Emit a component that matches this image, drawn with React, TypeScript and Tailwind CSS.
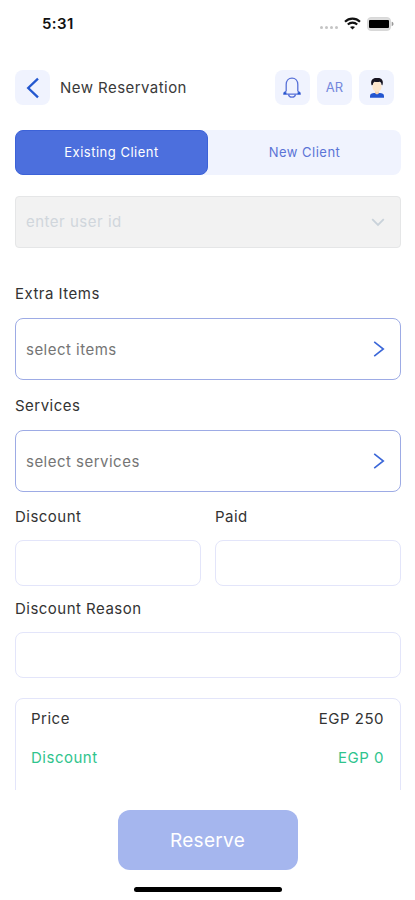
import React from 'react'
import { clsx } from 'clsx'

interface FieldProps {
  label: string
  className?: string
}

interface SelectBoxProps {
  label: string
  placeholder: string
}

const Label = ({ children, className }: { children: React.ReactNode; className?: string }) => (
  <span className={clsx('block h-6 text-[15px] leading-6 tracking-[0.48px] text-[#333]', className)}>{children}</span>
)

const IconButton = ({ children, label }: { children: React.ReactNode; label: string }) => (
  <button
    aria-label={label}
    className="flex h-[35px] w-[35px] items-center justify-center rounded-lg bg-[#f0f3fe] text-[13px] text-[#7387dc]"
  >
    {children}
  </button>
)

const StatusBar = () => (
  <div className="flex h-[47px] shrink-0 items-center justify-between pr-[21px] pl-[42px]">
    <span className="pt-px text-[15px] font-semibold tracking-[0.4px] text-[#111]">5:31</span>
    <div className="flex items-center">
      <div className="mt-2 mr-[6px] flex gap-[2px]">
        {[0, 1, 2, 3].map((dot) => (
          <span key={dot} className="h-[3px] w-[3px] rounded-full bg-[#c4c4c4]" />
        ))}
      </div>
      <svg width="17" height="13" viewBox="0 0 17 13" className="mr-[6px]" fill="none" stroke="#111" strokeWidth="2.1">
        <path d="M1 4.8C5.2.6 11.8.6 16 4.8" />
        <path d="M3.8 7.6c2.7-2.6 6.7-2.6 9.4 0" />
        <path d="M8.5 12.6 6 10.1c1.4-1.3 3.6-1.3 5 0z" fill="#111" stroke="none" />
      </svg>
      <svg width="27" height="14" viewBox="0 0 27 14">
        <rect x="0.5" y="0.5" width="23" height="13" rx="3.5" fill="#dcdcdc" stroke="#d8d8d8" />
        <rect x="2" y="3" width="20" height="8" rx="1" fill="#000" />
        <path d="M24.7 4.8c2.4.6 2.4 3.8 0 4.4z" fill="#999" />
      </svg>
    </div>
  </div>
)

const Header = () => (
  <header className="mt-[23px] flex h-[35px] shrink-0 items-center">
    <IconButton label="Back">
      <svg width="14" height="22" viewBox="0 0 14 22" fill="none" stroke="#2458cf" strokeWidth="2.3">
        <path d="M12 1.6 2.2 11l9.8 9.400" />
      </svg>
    </IconButton>
    <h1 className="ml-[10px] pt-0.5 text-[15px] tracking-[0.45px] text-[#3a3a3a]">New Reservation</h1>
    <div className="mr-[7px] ml-auto flex gap-[7px]">
      <IconButton label="Notifications">
        <svg width="20" height="22" viewBox="0 0 20 22" className="mr-0.5" fill="none" stroke="#5871d8" strokeWidth="1.3">
          <path d="M10 1.200C6.500 1.200 4.200 4 4.200 7.500v6.200c0 1-2.400 1.400-2.400 3.400h16.400c0-2-2.400-2.400-2.400-3.400V7.500c0-3.500-2.300-6.300-5.800-6.300z" />
          <path d="M6.500 17.300c.5 3.800 6.500 3.800 7 0" />
          <path d="M1.800 16.300h2.600M15.600 16.300h2.600" stroke="#2458cf" strokeWidth="2" />
        </svg>
      </IconButton>
      <IconButton label="Language">AR</IconButton>
      <IconButton label="Profile">
        <svg width="16" height="22" viewBox="0 0 16 22">
          <path d="M1 20.800v-1.900c0-2 2-2.900 4-2.900h6c2 0 4 .9 4 2.900v1.900z" fill="#2456d0" />
          <path d="M6 13h4v3.300l-2 1.300-2-1.300z" fill="#f7d3b0" />
          <ellipse cx="8" cy="9.500" rx="4.600" ry="5.400" fill="#fde6cc" />
          <path d="M2.600 8.300C1 3.200 4 1 7.300 1.100 12 .3 15.200 3 13.400 8.300l-.8-.2c0-1.800-.7-2.800-1.700-3.400-2 .6-4.200.5-5.400 0-1.200.8-1.700 1.800-1.700 3.400z" fill="#171420" />
        </svg>
      </IconButton>
    </div>
  </header>
)

const Tabs = () => (
  <div className="mt-[25px] flex h-[45px] shrink-0 rounded-lg bg-[#f0f3fe] text-[13px] tracking-[0.5px]">
    <button className="w-[193px] rounded-lg border border-[#3c62d8] bg-[#4c6fdd] text-white">Existing Client</button>
    <button className="flex-1 text-[#5b74d6]">New Client</button>
  </div>
)

const SelectBox = ({ label, placeholder }: SelectBoxProps) => (
  <div>
    <Label>{label}</Label>
    <button className="mt-3 flex h-[62px] w-full items-center justify-between rounded-lg border border-[#9dabe5] pr-[15px] pl-[10px] text-[15px] tracking-[0.48px] text-[#757575]">
      <span className="pt-0.5">{placeholder}</span>
      <svg width="12" height="16" viewBox="0 0 12 16" fill="none" stroke="#3b67d8" strokeWidth="1.6">
        <path d="M1.200.8 10.300 8l-9.100 7.200" />
      </svg>
    </button>
  </div>
)

const TextField = ({ label, className }: FieldProps) => (
  <label className={clsx('block', className)}>
    <Label>{label}</Label>
    <input className="mt-[11px] block h-[46px] w-full rounded-lg border border-[#e3e5fa] px-3 outline-none" />
  </label>
)

const SummaryRow = ({ name, value, className }: { name: string; value: string; className: string }) => (
  <div className={clsx('flex h-[39px] items-center justify-between', className)}>
    <span>{name}</span>
    <span>{value}</span>
  </div>
)

export default function App() {
  return (
    <div className="flex h-[900px] w-[415px] flex-col overflow-hidden bg-white font-['Inter','Roboto',sans-serif]">
      <StatusBar />

      <main className="flex h-[743px] shrink-0 flex-col overflow-hidden pr-[14px] pl-[15px]">
        <Header />
        <Tabs />

        <div className="mt-[21px] flex h-[52px] shrink-0 items-center justify-between rounded border border-[#e5e6e7] bg-[#f2f2f2] pr-[15px] pl-[10px] text-[15px] tracking-[0.5px] text-[#d0d6dc]">
          <span className="pt-px">enter user id</span>
          <svg width="14" height="9" viewBox="0 0 14 9" fill="none" stroke="#c9d2da" strokeWidth="1.8">
            <path d="M1.200 1.200 7 7l5.800-5.800" />
          </svg>
        </div>

        <div className="mt-[34px] flex shrink-0 flex-col gap-[14px]">
          <SelectBox label="Extra Items" placeholder="select items" />
          <SelectBox label="Services" placeholder="select services" />
        </div>

        <div className="mt-[13px] flex shrink-0 gap-[14px]">
          <TextField label="Discount" className="flex-1" />
          <TextField label="Paid" className="flex-1" />
        </div>
        <TextField label="Discount Reason" className="mt-[11px] shrink-0" />

        <section className="mt-5 h-[160px] shrink-0 rounded-lg border border-[#e3e5fa] pt-px pr-4 pl-[15px] text-[15px] tracking-[0.5px]">
          <SummaryRow name="Price" value="EGP 250" className="text-[#333]" />
          <SummaryRow name="Discount" value="EGP 0" className="text-[#2fc48d]" />
        </section>
      </main>

      <footer className="flex flex-1 flex-col items-center pt-5">
        <button className="h-[60px] w-[180px] rounded-xl bg-[#a5b6ee] pt-0.5 text-[19px] tracking-[0.3px] text-white">Reserve</button>
        <div className="mt-[17px] h-[5px] w-[148px] rounded-full bg-black" />
      </footer>
    </div>
  )
}
